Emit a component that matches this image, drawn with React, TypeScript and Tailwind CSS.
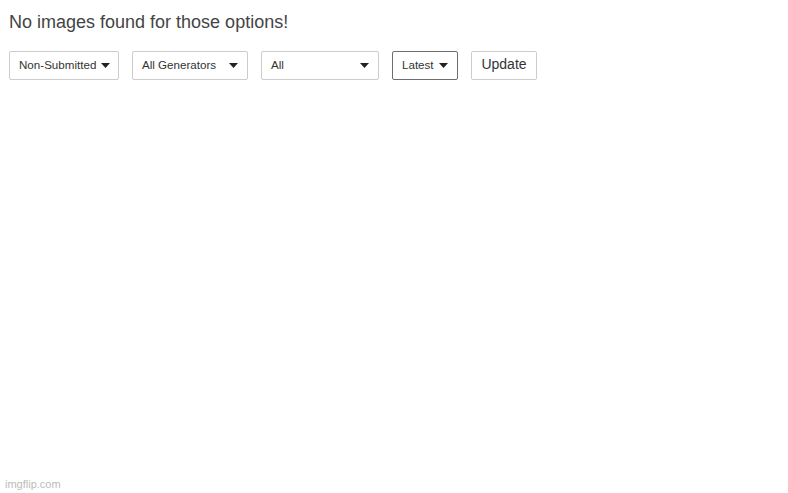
import React from "react";

function Caret() {
  return (
    <svg width="9" height="5" viewBox="0 0 9 5" className="ml-[5px] shrink-0">
      <path d="M0 0 L9 0 L4.5 5 Z" fill="#222" />
    </svg>
  );
}

function Sel({ label, w, dark }: { label: string; w: string; dark?: boolean }) {
  return (
    <div
      className={`flex h-[29px] items-center justify-between rounded-[2px] border bg-white pb-[1px] pl-[9px] pr-[9px] text-[11.6px] text-[#333] ${w} ${
        dark ? "border-[#6e6e6e]" : "border-[#ccc]"
      }`}
    >
      <span className="whitespace-nowrap">{label}</span>
      <Caret />
    </div>
  );
}

export default function App() {
  return (
    <div
      className="relative h-[493px] w-[788px] bg-white"
      style={{ fontFamily: '"Liberation Sans", Arial, sans-serif' }}
    >
      <div className="px-[9px] pt-[11px]">
        <div className="text-[18px] leading-[22px] text-[#444]">No images found for those options!</div>
        <div className="mt-[18px] flex items-center">
          <Sel label="Non-Submitted" w="w-[110px]" />
          <div className="w-[13px]" />
          <Sel label="All Generators" w="w-[116px]" />
          <div className="w-[13px]" />
          <Sel label="All" w="w-[118px]" />
          <div className="w-[13px]" />
          <Sel label="Latest" w="w-[66px]" dark />
          <div className="w-[13px]" />
          <button className="h-[29px] w-[66px] rounded-[2px] border border-[#ccc] bg-white pb-[2px] text-[14px] text-[#333]">
            Update
          </button>
        </div>
      </div>
      <div className="absolute bottom-[1px] left-[5px] text-[11px] text-[#bbb]">imgflip.com</div>
    </div>
  );
}
